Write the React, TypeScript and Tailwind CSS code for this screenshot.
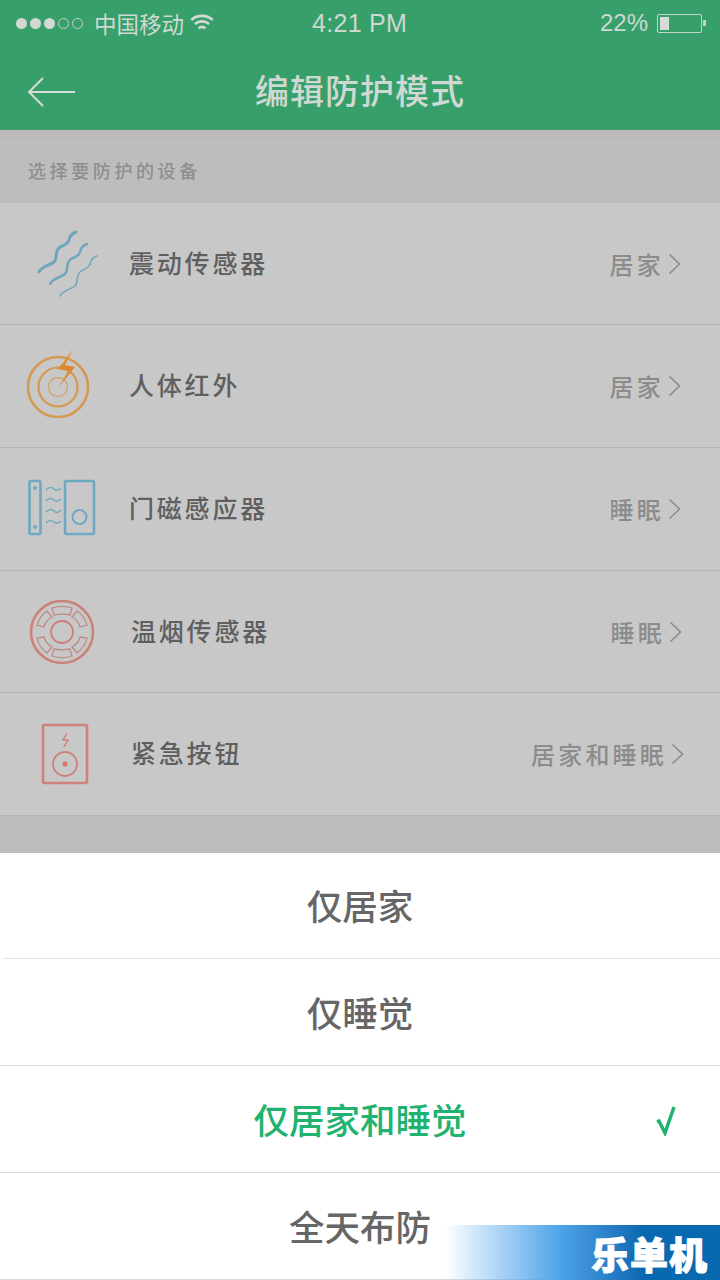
import React from 'react';

const cjk = { fontFamily: '"Noto Sans CJK SC", "Noto Sans", sans-serif' };

function WaveIcon() {
  const wave = 'M13 45c3-6 10-6 15-10 4-4 0-11 6-15 6-3 9-4 10-10 1-2 3-4 6-5';
  return (
    <svg viewBox="0 0 70 70" width="70" height="70" fill="none" stroke="#6ea6bd" strokeLinecap="round" className="overflow-visible">
      <path strokeWidth="3" d={wave} />
      <path strokeWidth="2.4" d={wave} transform="translate(11 12)" />
      <path strokeWidth="1.5" d={wave} transform="translate(21 24)" />
    </svg>
  );
}

function RadarIcon() {
  return (
    <svg viewBox="0 0 70 70" width="70" height="70" fill="none">
      <circle cx="33" cy="38" r="30" stroke="#d39a52" strokeWidth="2.6" />
      <circle cx="33" cy="38" r="19.5" stroke="#d39a52" strokeWidth="2.2" />
      <circle cx="33" cy="38" r="9.5" stroke="#d0a46e" strokeWidth="1.4" />
      <path fill="#dd8a2e" d="M48 0 38 14l-6 6 11 2-9 16 16-20-10-2z" />
    </svg>
  );
}

function DoorIcon() {
  return (
    <svg viewBox="0 0 70 60" width="70" height="60" fill="none" stroke="#6ea9c2">
      <rect x="1.5" y="2" width="11" height="53" rx="1.5" strokeWidth="2.6" />
      <circle cx="7" cy="9" r="1.8" fill="#6ea9c2" strokeWidth="0.5" />
      <circle cx="7" cy="48" r="1.8" fill="#6ea9c2" strokeWidth="0.5" />
      <rect x="37" y="2" width="29" height="53" rx="1.5" strokeWidth="2.6" />
      <circle cx="51.5" cy="38" r="7" strokeWidth="2" />
      <path strokeWidth="1.4" d="M18 11c3-3 6-3 8-1s4 2 7-1M18 22c3-3 6-3 8-1s4 2 7-1M18 33c3-3 6-3 8-1s4 2 7-1M18 44c3-3 6-3 8-1s4 2 7-1" />
    </svg>
  );
}

function SmokeIcon() {
  return (
    <svg viewBox="0 0 70 70" width="70" height="70" fill="none" stroke="#cc8178">
      <circle cx="35" cy="35" r="31" strokeWidth="2.6" />
      <circle cx="35" cy="35" r="11" strokeWidth="1.8" />
      <g strokeWidth="1.3" stroke="#bd8a84">
        <path d="M25 11c6-2 14-2 20 0l-2 7c-5-1-11-1-16 0z" />
        <path d="M25 59c6 2 14 2 20 0l-2-7c-5 1-11 1-16 0z" />
        <path d="M50 14c5 3 8 8 10 14l-7 2c-1-4-4-8-8-10z" />
        <path d="M20 14c-5 3-8 8-10 14l7 2c1-4 4-8 8-10z" />
        <path d="M60 41c-1 6-5 11-10 15l-5-6c4-2 7-6 8-10z" />
        <path d="M10 41c1 6 5 11 10 15l5-6c-4-2-7-6-8-10z" />
      </g>
    </svg>
  );
}

function ButtonIcon() {
  return (
    <svg viewBox="0 0 50 64" width="50" height="64" fill="none" stroke="#cf8078">
      <rect x="3" y="3" width="44" height="58" rx="1.5" strokeWidth="2.6" />
      <path strokeWidth="1.4" d="M27 11l-4 7h5l-4 7" />
      <circle cx="25" cy="42" r="12" strokeWidth="1.8" />
      <circle cx="25" cy="42" r="2.6" fill="#d9776c" stroke="none" />
    </svg>
  );
}

const devices = [
  { name: '震动传感器', mode: '居家', icon: <WaveIcon />, iconBox: 'w-[70px] ml-[26px] mt-[-4px]', nameBox: 'ml-[33px]', modeBox: 'mr-[39px]', h: 'h-[122px]' },
  { name: '人体红外', mode: '居家', icon: <RadarIcon />, iconBox: 'w-[70px] ml-[25px] mt-[-4px]', nameBox: 'ml-[34px]', modeBox: 'mr-[39px]', h: 'h-[123px]' },
  { name: '门磁感应器', mode: '睡眠', icon: <DoorIcon />, iconBox: 'w-[70px] ml-[28px]', nameBox: 'ml-[31px]', modeBox: 'mr-[39px]', h: 'h-[123px]' },
  { name: '温烟传感器', mode: '睡眠', icon: <SmokeIcon />, iconBox: 'w-[70px] ml-[27px]', nameBox: 'ml-[34px]', modeBox: 'mr-[38px]', h: 'h-[122px]' },
  { name: '紧急按钮', mode: '居家和睡眠', icon: <ButtonIcon />, iconBox: 'w-[50px] ml-[40px]', nameBox: 'ml-[41px]', modeBox: 'mr-[36px]', h: 'h-[123px]' },
];

const options = [
  { label: '仅居家', h: 'h-[106px]' },
  { label: '仅睡觉', h: 'h-[107px]' },
  { label: '仅居家和睡觉', h: 'h-[107px]' },
  { label: '全天布防', h: 'h-[107px]' },
];

export default function App() {
  return (
    <div className="relative w-[720px] h-[1280px] overflow-hidden flex flex-col bg-[#bdbdbd]" style={cjk}>
      {/* status bar + nav */}
      <div className="h-[130px] bg-[#37a06a] flex flex-col shrink-0 text-[#cfd8d2]">
        <div className="h-[46px] flex items-center relative px-[16px]">
          <div className="flex items-center gap-[3px]">
            <span className="w-[11px] h-[11px] rounded-full bg-[#d4d8d3]" />
            <span className="w-[11px] h-[11px] rounded-full bg-[#d4d8d3]" />
            <span className="w-[11px] h-[11px] rounded-full bg-[#d4d8d3]" />
            <span className="w-[11px] h-[11px] rounded-full border border-[#c5d3ca]" />
            <span className="w-[11px] h-[11px] rounded-full border border-[#c5d3ca]" />
          </div>
          <span className="ml-[11px] text-[22.500px] leading-none">中国移动</span>
          <svg viewBox="0 0 20 16" width="24" height="19" className="ml-[6px]" fill="none" stroke="#d4d8d3" strokeWidth="2.200">
            <path d="M1 5c5-4.500 13-4.500 18 0M4 8.500c3.500-3 8.500-3 12 0M7 12c2-1.500 4-1.500 6 0" />
          </svg>
          <span className="absolute left-[312px] top-[9px] text-[25px] leading-[28px] tracking-[0.3px]" style={{ fontFamily: '"Liberation Sans", sans-serif' }}>4:21 PM</span>
          <div className="ml-auto flex items-center mr-[-2px]">
            <span className="text-[24px] leading-none" style={{ fontFamily: '"Liberation Sans", sans-serif' }}>22%</span>
            <div className="ml-[9px] w-[45px] h-[19px] rounded-[2px] border border-[#c5d3ca] p-[2px]">
              <div className="w-[9px] h-full bg-[#d8dcd8]" />
            </div>
            <span className="ml-[1px] w-[3px] h-[6px] bg-[#c5d3ca]" />
          </div>
        </div>
        <div className="relative flex-1 flex items-center justify-center">
          <svg viewBox="0 0 48 30" width="48" height="30" className="absolute left-[27px] top-[31px]" fill="none" stroke="#d4dcd6" strokeWidth="2">
            <path d="M48 15H2M16 1 2 15l14 14" />
          </svg>
          <span className="text-[34px] leading-none tracking-[1px] font-medium mt-[3px]">编辑防护模式</span>
        </div>
      </div>

      {/* section label */}
      <div className="h-[73px] flex items-center pl-[28px] shrink-0 border-t-[8px] border-[#bdb9b9] pb-[2px]">
        <span className="text-[18px] leading-none tracking-[3.600px] text-[#8e8e8e] font-medium">选择要防护的设备</span>
      </div>

      {/* devices */}
      <div className="bg-[#c8c8c8] flex flex-col shrink-0">
        {devices.map((d) => (
          <div key={d.name} className={`${d.h} flex items-center border-b border-[#b5b5b5]`}>
            <div className={`${d.iconBox} flex justify-center shrink-0`}>{d.icon}</div>
            <span className={`${d.nameBox} text-[25px] leading-none tracking-[2.800px] text-[#5f5f5f] font-medium mt-[-3px]`}>{d.name}</span>
            <div className={`ml-auto ${d.modeBox} flex items-center gap-[4px] text-[#8c8c8c]`}>
              <span className="text-[24px] leading-none tracking-[3.200px] font-medium">{d.mode}</span>
              <svg viewBox="0 0 13 22" width="13" height="22" fill="none" stroke="#8c8c8c" strokeWidth="1.600">
                <path d="M1.500 1.500 11.500 11 1.500 20.500" />
              </svg>
            </div>
          </div>
        ))}
      </div>

      <div className="flex-1" />

      {/* bottom sheet */}
      <div className="bg-white flex flex-col shrink-0">
        {options.map((o, i) => (
          <div
            key={o.label}
            className={`relative ${o.h} flex items-center justify-center border-b ${i === 0 ? 'ml-[3px] border-[#e2e2e2]' : 'border-[#dcdcdc]'}`}
          >
            <span className={`text-[35.500px] leading-none font-medium mt-[-1px] ${i === 2 ? 'text-[#22b26f]' : 'text-[#666666]'} ${i === 0 ? 'mr-[3px]' : ''}`}>{o.label}</span>
            {i === 2 && (
              <svg viewBox="0 0 20 30" width="20" height="30" className="absolute right-[44px] top-[40px]" fill="none" stroke="#22b26f" strokeWidth="3.500">
                <path d="M1 16l2-1 6 12L18 1" />
              </svg>
            )}
          </div>
        ))}
      </div>

      {/* watermark */}
      <div className="absolute right-0 bottom-0 w-[275px] h-[55px] bg-gradient-to-r from-[#ffffff00] via-[#4da3ea] via-42% to-[#0868b0] to-72% flex items-center justify-end pr-[12px]">
        <span className="text-[38px] leading-none font-black text-white tracking-[1px] [-webkit-text-stroke:1px_white]">乐单机</span>
      </div>
    </div>
  );
}
